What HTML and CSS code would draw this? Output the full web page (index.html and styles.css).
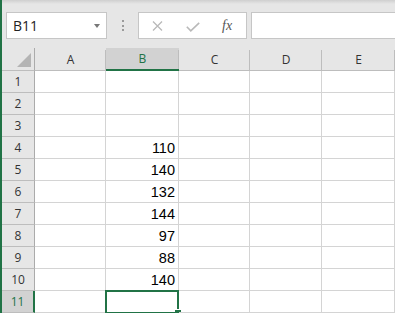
FILE: index.html
```html
<!DOCTYPE html>
<html lang="en">
<head>
  <meta charset="UTF-8" />
  <title>Sheet1</title>
  <link rel="stylesheet" href="styles.css">
</head>
<body>
  <div class="toolbar">
    <div class="namebox">
      <span>B11</span>
      <span class="arrow"></span>
    </div>
    <div class="grip"><i></i><i></i><i></i></div>
    <div class="fxbox">
      <svg class="ic-x" width="11" height="10" viewBox="0 0 11 10"><path d="M1 0.5 L10 9.5 M10 0.5 L1 9.5" stroke="#b9b9b9" stroke-width="1.3" fill="none"/></svg>
      <svg class="ic-check" width="14" height="10" viewBox="0 0 14 10"><path d="M0.8 4.8 L4.8 8.8 L13.2 0.8" stroke="#b9b9b9" stroke-width="1.6" fill="none"/></svg>
      <span class="fx">fx</span>
    </div>
    <div class="formula"></div>
  </div>

  <div class="sheet">
    <div class="corner"><span class="tri"></span></div>
    <div class="colhead">A</div>
    <div class="colhead active">B</div>
    <div class="colhead">C</div>
    <div class="colhead">D</div>
    <div class="colhead">E</div>

    <div class="rowhead">1</div><div class="cell"></div><div class="cell"></div><div class="cell"></div><div class="cell"></div><div class="cell"></div>
    <div class="rowhead">2</div><div class="cell"></div><div class="cell"></div><div class="cell"></div><div class="cell"></div><div class="cell"></div>
    <div class="rowhead">3</div><div class="cell"></div><div class="cell"></div><div class="cell"></div><div class="cell"></div><div class="cell"></div>
    <div class="rowhead">4</div><div class="cell"></div><div class="cell num">110</div><div class="cell"></div><div class="cell"></div><div class="cell"></div>
    <div class="rowhead">5</div><div class="cell"></div><div class="cell num">140</div><div class="cell"></div><div class="cell"></div><div class="cell"></div>
    <div class="rowhead">6</div><div class="cell"></div><div class="cell num">132</div><div class="cell"></div><div class="cell"></div><div class="cell"></div>
    <div class="rowhead">7</div><div class="cell"></div><div class="cell num">144</div><div class="cell"></div><div class="cell"></div><div class="cell"></div>
    <div class="rowhead">8</div><div class="cell"></div><div class="cell num">97</div><div class="cell"></div><div class="cell"></div><div class="cell"></div>
    <div class="rowhead">9</div><div class="cell"></div><div class="cell num">88</div><div class="cell"></div><div class="cell"></div><div class="cell"></div>
    <div class="rowhead">10</div><div class="cell"></div><div class="cell num">140</div><div class="cell"></div><div class="cell"></div><div class="cell"></div>
    <div class="rowhead active">11</div><div class="cell"></div><div class="cell selected"></div><div class="cell"></div><div class="cell"></div><div class="cell"></div>
  </div>
</body>
</html>
```

FILE: styles.css
```css
* {
  margin: 0;
  padding: 0;
  box-sizing: border-box;
}
body {
  width: 395px;
  height: 313px;
  overflow: hidden;
  background: #e6e6e6;
  border-left: 2px solid #217346;
  font-family: "Segoe UI", "Open Sans", sans-serif;
  color: #333;
}
.toolbar {
  display: flex;
  align-items: flex-start;
  height: 48px;
  padding: 12px 0 0 4px;
  background: linear-gradient(#cfcfcf, #e6e6e6 4px);
}
.namebox, .fxbox, .formula {
  height: 27px;
  background: #fff;
  border: 1px solid #c6c6c6;
}
.namebox {
  width: 101px;
  display: flex;
  align-items: center;
  padding-left: 6px;
  font-size: 14px;
  color: #222;
}
.namebox span:first-child {
  flex: 1;
}
.arrow {
  width: 0;
  height: 0;
  margin-right: 6px;
  border-left: 3px solid transparent;
  border-right: 3px solid transparent;
  border-top: 4px solid #777;
}
.grip {
  width: 31px;
  height: 27px;
  display: flex;
  flex-direction: column;
  align-items: center;
  justify-content: center;
  gap: 2.5px;
}
.grip i {
  display: block;
  width: 2px;
  height: 2px;
  background: #9a9a9a;
}
.fxbox {
  width: 109px;
  display: flex;
  align-items: center;
  padding-left: 13px;
}
.ic-x {
  margin-right: 23px;
}
.ic-check {
  margin-right: 22px;
  margin-top: 2px;
}
.fx {
  font-family: "Liberation Serif", serif;
  font-style: italic;
  font-size: 14px;
  color: #555;
}
.formula {
  flex: 1;
  margin-left: 4px;
  margin-right: -2px;
}

.sheet {
  display: grid;
  grid-template-columns: 33px 71px 73px 71px 72px 73px;
  grid-template-rows: 23px repeat(11, 22px);
}
.corner {
  position: relative;
  border-bottom: 1px solid #bdbdbd;
  border-right: 1px solid #ababab;
}
.tri {
  position: absolute;
  right: 3px;
  bottom: 3px;
  width: 0;
  height: 0;
  border-left: 14px solid transparent;
  border-bottom: 14px solid #b4b4b4;
}
.colhead {
  display: flex;
  align-items: center;
  justify-content: center;
  font-size: 12px;
  color: #333;
  border-bottom: 1px solid #bdbdbd;
  position: relative;
}
.colhead::after {
  content: "";
  position: absolute;
  right: 0;
  top: 2px;
  bottom: 0;
  width: 1px;
  background: #bdbdbd;
}
.colhead.active {
  background: #d2d2d2;
  color: #217346;
  border-bottom: 2px solid #217346;
}
.rowhead {
  display: flex;
  align-items: center;
  justify-content: center;
  font-size: 12px;
  color: #333;
  border-bottom: 1px solid #bdbdbd;
  border-right: 1px solid #ababab;
}
.rowhead.active {
  background: #d2d2d2;
  color: #217346;
  border-right: 2px solid #217346;
}
.cell {
  background: #fff;
  border-right: 1px solid #d4d4d4;
  border-bottom: 1px solid #d4d4d4;
}
.num {
  display: flex;
  align-items: center;
  justify-content: flex-end;
  padding: 1px 3px 0 0;
  font-family: "Liberation Sans", Arial, sans-serif;
  font-size: 14.5px;
  color: #000;
}
.selected {
  position: relative;
}
.selected::before {
  content: "";
  position: absolute;
  left: -1px;
  top: -1px;
  right: -1px;
  bottom: -2px;
  border: 2px solid #217346;
}
.selected::after {
  content: "";
  position: absolute;
  right: -3px;
  bottom: 0;
  width: 6px;
  height: 2px;
  background: #217346;
  border-top: 1px solid #fff;
  border-left: 1px solid #fff;
  box-sizing: content-box;
}
```
